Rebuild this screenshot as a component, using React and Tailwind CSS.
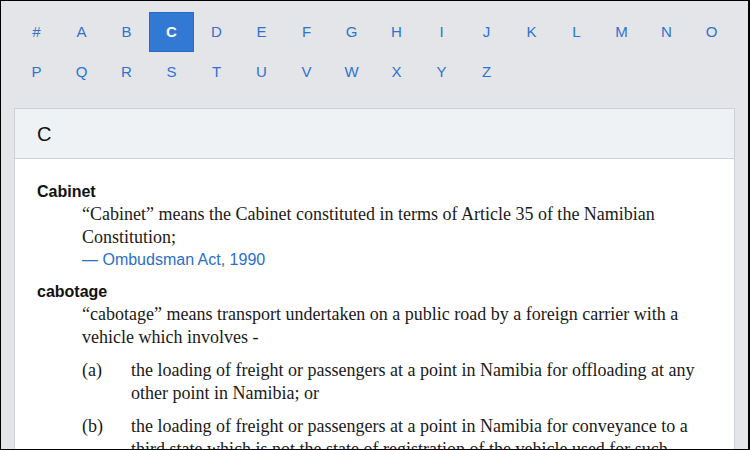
const letters = ['#', 'A', 'B', 'C', 'D', 'E', 'F', 'G', 'H', 'I', 'J', 'K', 'L', 'M', 'N', 'O', 'P', 'Q', 'R', 'S', 'T', 'U', 'V', 'W', 'X', 'Y', 'Z'];

const sans = "font-['Liberation_Sans',Arial,sans-serif]";
const serif = "font-['Liberation_Serif','Times_New_Roman',serif]";

function LetterNav({ active }) {
  return (
    <nav className="flex flex-wrap pt-[11px]">
      {letters.map((l) =>
        l === active ? (
          <a
            key={l}
            href="#"
            className="flex h-[40px] w-[45px] items-center justify-center border border-[#2a6cc4] bg-[#3279d3] text-[15px] font-bold text-white"
          >
            {l}
          </a>
        ) : (
          <a
            key={l}
            href="#"
            className="flex h-[40px] w-[45px] items-center justify-center text-[15px] text-[#2f72cf]"
          >
            {l}
          </a>
        )
      )}
    </nav>
  );
}

function Term({ word, children }) {
  return (
    <div className="mb-[10px]">
      <div className={`${sans} text-[16px] font-bold leading-[22px] text-[#111]`}>{word}</div>
      <div className="pl-[45px]">{children}</div>
    </div>
  );
}

function Item({ label, children }) {
  return (
    <div className="mt-[10px] flex">
      <div className="w-[49px] shrink-0">{label}</div>
      <div>{children}</div>
    </div>
  );
}

export default function App() {
  return (
    <div className={`${sans} h-[450px] w-[750px] overflow-hidden border-t border-r-2 border-b border-l border-black bg-[#e4e5e9]`}>
      <div className="px-[13px]">
        <LetterNav active="C" />
        <div className="mt-[16px] border border-[#cdd2d8] bg-white">
          <div className="flex h-[50px] items-center border-b border-[#cdd2d8] bg-[#eef2f5] px-[22px] text-[20px] text-[#111]">
            C
          </div>
          <div className="px-[22px] pt-[22px]">
            <Term word="Cabinet">
              <p className={`${serif} text-[18px] leading-[23px] text-[#1a1a1a]`}>
                “Cabinet” means the Cabinet constituted in terms of Article 35 of the Namibian Constitution;
              </p>
              <a href="#" className="block text-[16px] leading-[22px] text-[#2a6fc9]">
                — Ombudsman Act, 1990
              </a>
            </Term>
            <Term word="cabotage">
              <div className={`${serif} text-[18px] leading-[23px] text-[#1a1a1a]`}>
                <p>“cabotage” means transport undertaken on a public road by a foreign carrier with a vehicle which involves -</p>
                <Item label="(a)">
                  the loading of freight or passengers at a point in Namibia for offloading at any other point in Namibia; or
                </Item>
                <Item label="(b)">
                  the loading of freight or passengers at a point in Namibia for conveyance to a third state which is not the state of registration of the vehicle used for such conveyance;
                </Item>
              </div>
            </Term>
          </div>
        </div>
      </div>
    </div>
  );
}
